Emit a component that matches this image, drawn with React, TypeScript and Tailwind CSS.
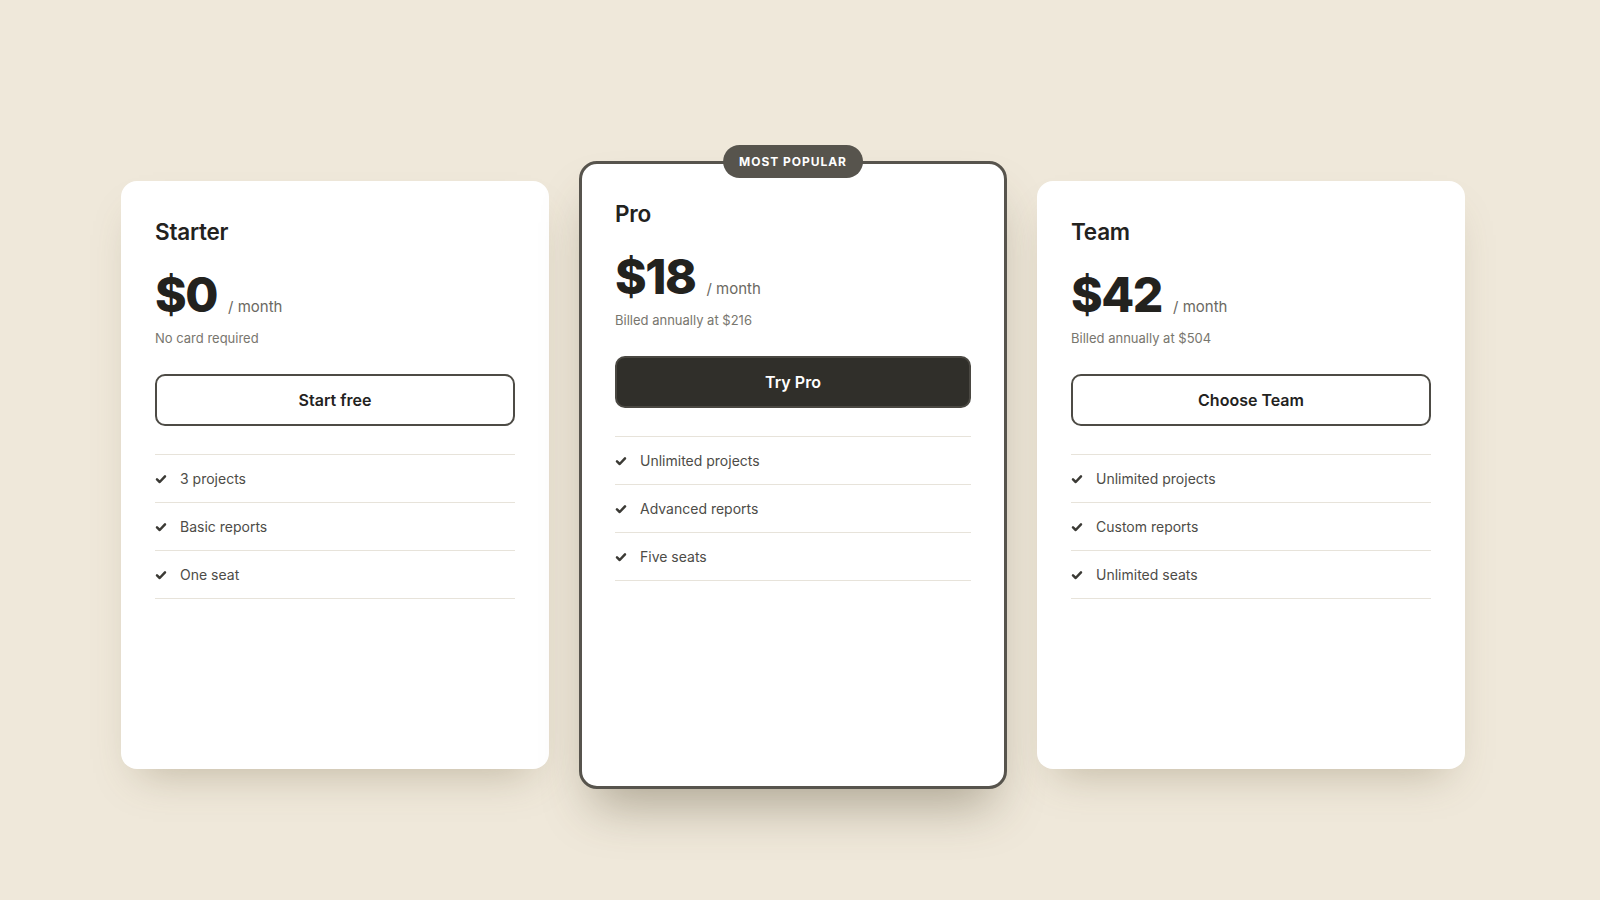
const plans = [
  {
    name: 'Starter',
    price: '$0',
    note: 'No card required',
    cta: 'Start free',
    features: ['3 projects', 'Basic reports', 'One seat'],
    featured: false,
  },
  {
    name: 'Pro',
    price: '$18',
    note: 'Billed annually at $216',
    cta: 'Try Pro',
    features: ['Unlimited projects', 'Advanced reports', 'Five seats'],
    featured: true,
  },
  {
    name: 'Team',
    price: '$42',
    note: 'Billed annually at $504',
    cta: 'Choose Team',
    features: ['Unlimited projects', 'Custom reports', 'Unlimited seats'],
    featured: false,
  },
];

function Check() {
  return (
    <svg width="12" height="12" viewBox="0 0 12 12" fill="none" aria-hidden className="shrink-0">
      <path d="M2 6.4 4.7 9 10 3.4" stroke="#3b3a35" strokeWidth="2.5" strokeLinecap="round" strokeLinejoin="round" />
    </svg>
  );
}

export default function App() {
  return (
    <div
      className="flex min-h-[900px] w-full items-center bg-[#efe8da] pb-[111px] pl-[121px] pt-[161px]"
      style={{ fontFamily: 'Inter, "Noto Sans", sans-serif' }}
    >
      <div className="flex items-center gap-[30px]">
        {plans.map((plan) => (
          <div
            key={plan.name}
            className={
              plan.featured
                ? 'relative h-[628px] w-[428px] rounded-[18px] border-[3px] border-[#57544d] bg-white px-[33px] pt-[36px] shadow-[0_30px_50px_-14px_rgba(80,70,45,0.4)]'
                : 'relative h-[588px] w-[428px] rounded-[16px] bg-white px-[34px] pt-[37px] shadow-[0_22px_40px_-18px_rgba(110,95,60,0.35)]'
            }
          >
            {plan.featured && (
              <div className="absolute left-1/2 top-[-19px] flex h-[33px] -translate-x-1/2 items-center rounded-full bg-[#57544d] px-[16px] text-[12px] font-bold tracking-[0.08em] text-white">
                MOST POPULAR
              </div>
            )}
            <h2 className="text-[22.5px] font-semibold leading-[28px] tracking-[-0.01em] text-[#23221e]">
              {plan.name}
            </h2>
            <div className="mt-[25px] flex items-baseline">
              <span className="text-[48px] font-extrabold leading-[48px] tracking-[-0.03em] text-[#23221e]">
                {plan.price}
              </span>
              <span className="ml-[11px] text-[15px] text-[#6b6962]">/ month</span>
            </div>
            <p className="mt-[9px] text-[13px] leading-[20px] text-[#78766e]">{plan.note}</p>
            <button
              className={
                plan.featured
                  ? 'mt-[26px] flex h-[52px] w-full items-center justify-center rounded-[10px] border-2 border-[#4a4842] bg-[#302f2a] text-[16px] font-semibold text-white'
                  : 'mt-[26px] flex h-[52px] w-full items-center justify-center rounded-[10px] border-2 border-[#4d4b45] bg-white text-[16px] font-semibold text-[#23221e]'
              }
            >
              {plan.cta}
            </button>
            <ul className="mt-[28px] border-t border-[#e7e3da]">
              {plan.features.map((f) => (
                <li
                  key={f}
                  className="flex h-[48px] items-center gap-[13px] border-b border-[#e7e3da] text-[14px] text-[#4d4c47]"
                >
                  <Check />
                  <span>{f}</span>
                </li>
              ))}
            </ul>
          </div>
        ))}
      </div>
    </div>
  );
}
